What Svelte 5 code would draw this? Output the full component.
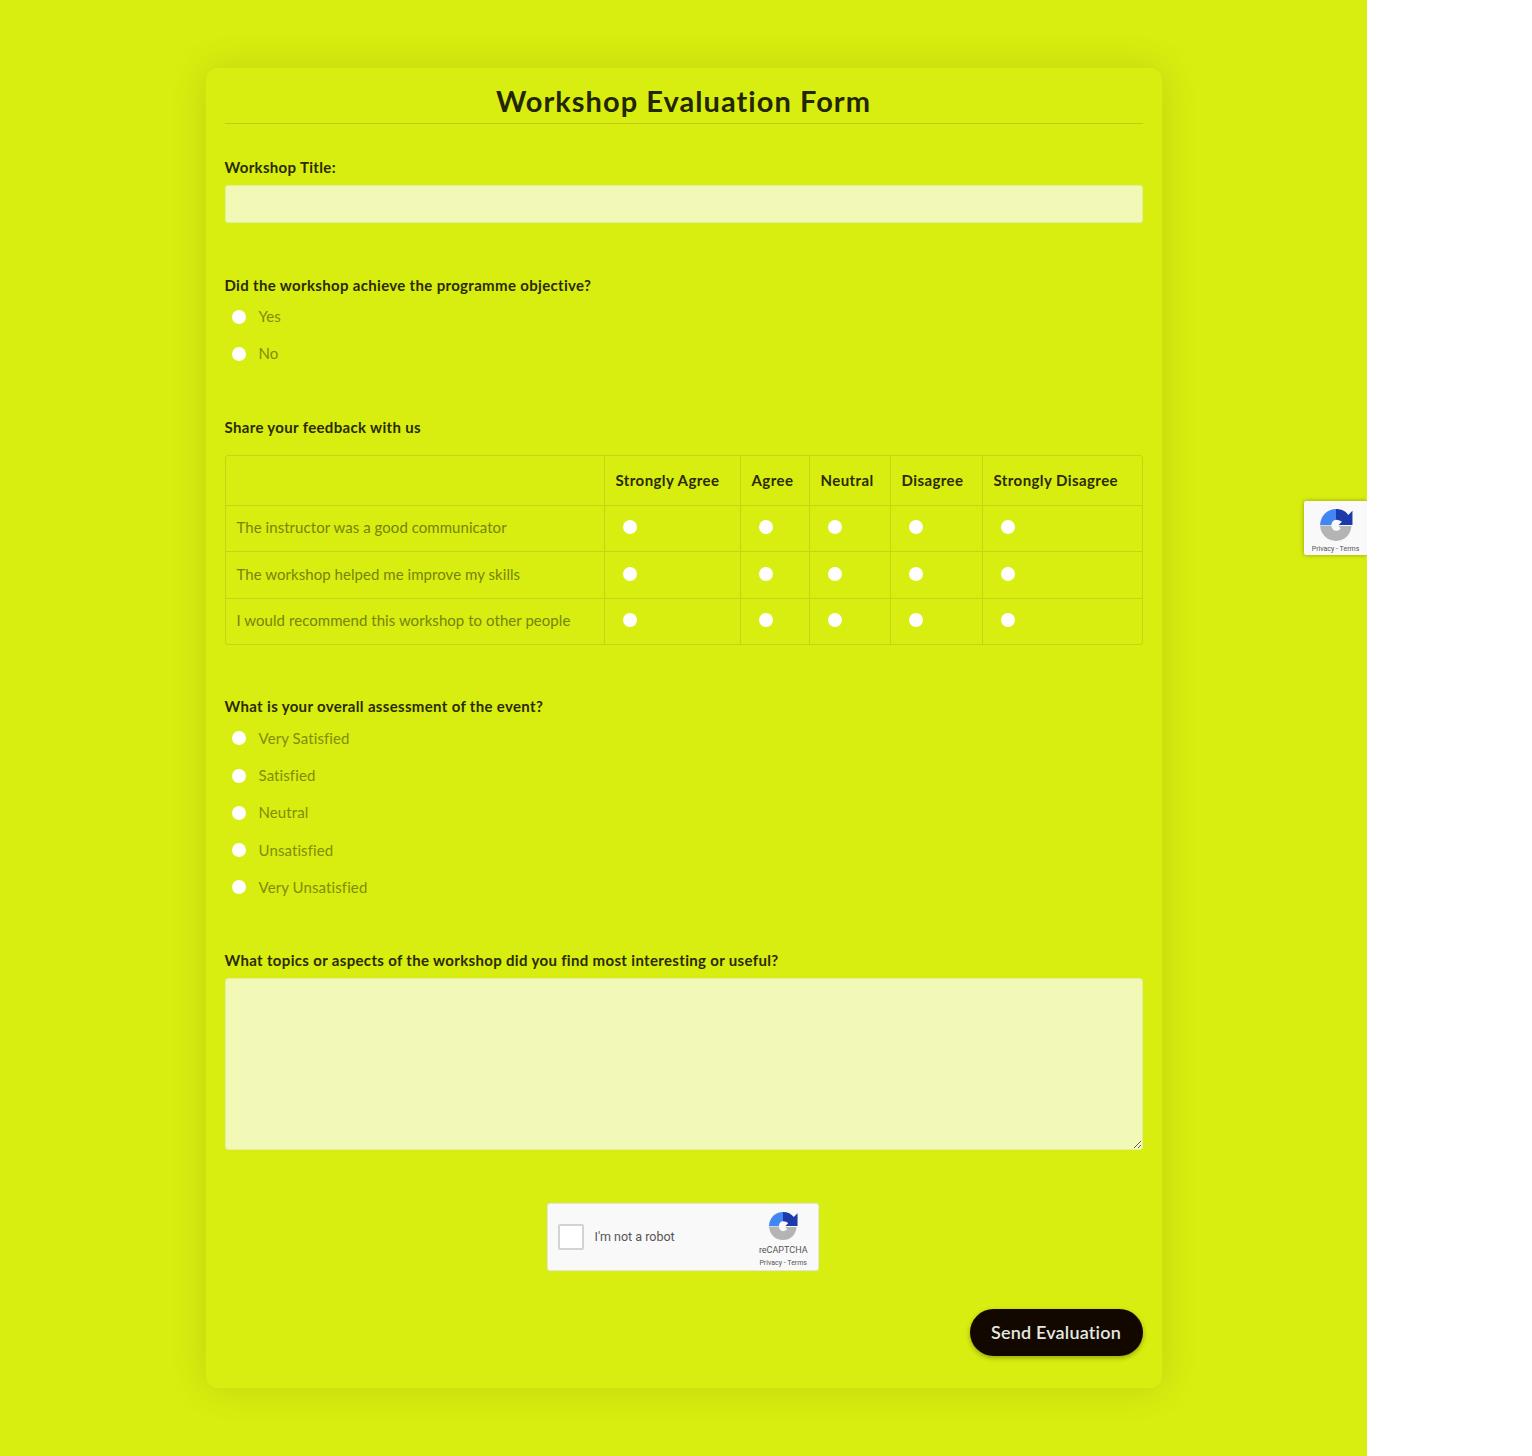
<script lang="ts">
  const columns = [
    { name: 'Strongly Agree', width: 136 },
    { name: 'Agree', width: 69 },
    { name: 'Neutral', width: 81 },
    { name: 'Disagree', width: 92 },
    { name: 'Strongly Disagree', width: 160 }
  ];
  const statements = [
    'The instructor was a good communicator',
    'The workshop helped me improve my skills',
    'I would recommend this workshop to other people'
  ];
  const assessment = ['Very Satisfied', 'Satisfied', 'Neutral', 'Unsatisfied', 'Very Unsatisfied'];
</script>

{#snippet logo(size: number)}
  <svg class="logo" width={size} height={size} viewBox="0 0 64 64" aria-hidden="true">
    <path fill="#1c3aa9" d="M32 2C42 2 50 6 55 13L63 5V32H37L43 26C41 24 37 22 32 22Z" />
    <path fill="#4285f4" d="M32 2V22C27 22 24 26 23 32H2C3 14 16 2 32 2Z" />
    <path fill="#b4b4b4" d="M2 33H23C24 39 27 43 32 43C36 43 39 41 41 38L36 34H61C60 50 48 62 32 62C16 62 3 50 2 33Z" />
  </svg>
{/snippet}

<div class="page">
  <form class="card">
    <h1>Workshop Evaluation Form</h1>

    <section class="title-field">
      <label for="title">Workshop Title:</label>
      <input id="title" class="text" type="text" />
    </section>

    <section class="objective">
      <p class="label">Did the workshop achieve the programme objective?</p>
      <div class="options">
        <label class="option"><input type="radio" name="objective" />Yes</label>
        <label class="option"><input type="radio" name="objective" />No</label>
      </div>
    </section>

    <section class="feedback">
      <p class="label">Share your feedback with us</p>
      <table>
        <thead>
          <tr>
            <th></th>
            {#each columns as col}
              <th style="width: {col.width}px">{col.name}</th>
            {/each}
          </tr>
        </thead>
        <tbody>
          {#each statements as statement, i}
            <tr>
              <td class="statement">{statement}</td>
              {#each columns as col}
                <td><input type="radio" name="row-{i}" aria-label={col.name} /></td>
              {/each}
            </tr>
          {/each}
        </tbody>
      </table>
    </section>

    <section class="overall">
      <p class="label">What is your overall assessment of the event?</p>
      <div class="options">
        {#each assessment as item}
          <label class="option"><input type="radio" name="overall" />{item}</label>
        {/each}
      </div>
    </section>

    <section class="topics">
      <label for="topics">What topics or aspects of the workshop did you find most interesting or useful?</label>
      <textarea id="topics"></textarea>
    </section>

    <div class="captcha">
      <span class="check"></span>
      <span class="robot">I'm not a robot</span>
      <div class="brand">
        {@render logo(30)}
        <span class="brand-name">reCAPTCHA</span>
        <span class="brand-links">Privacy - Terms</span>
      </div>
    </div>

    <div class="actions">
      <button type="button">Send Evaluation</button>
    </div>
  </form>

  <div class="badge">
    {@render logo(34)}
    <span class="brand-links">Privacy - Terms</span>
  </div>
</div>

<style>
  :global(body) {
    margin: 0;
    background: #fff;
  }

  .page {
    position: relative;
    width: 1367px;
    height: 1456px;
    padding-top: 68px;
    box-sizing: border-box;
    background: #d8ee10;
    font-family: Lato, "Noto Sans", sans-serif;
    color: #2b2b00;
    overflow: hidden;
  }

  .card {
    width: 956px;
    height: 1320px;
    margin: 0 auto;
    padding: 0 19px;
    box-sizing: border-box;
    border-radius: 12px;
    background: #d8ee10;
    box-shadow: 0 0 36px rgba(70, 80, 0, 0.16);
  }

  h1 {
    margin: 0;
    height: 56px;
    box-sizing: border-box;
    padding-top: 15px;
    border-bottom: 1px solid #bccf14;
    font-size: 29px;
    line-height: 36px;
    font-weight: 700;
    letter-spacing: 1.05px;
    text-align: center;
    color: #232600;
  }

  section label:not(.option),
  .label {
    display: block;
    margin: 0;
    font-size: 15px;
    line-height: 20px;
    font-weight: 700;
    letter-spacing: 0.33px;
    color: #2b2b00;
  }

  .title-field {
    margin-top: 33px;
  }

  .text {
    display: block;
    width: 100%;
    height: 38px;
    margin-top: 8px;
    box-sizing: border-box;
    border: 1px solid #e6ed9f;
    border-radius: 3px;
    background: #f2f8b6;
  }

  .objective {
    margin-top: 52px;
  }

  .options {
    display: flex;
    flex-direction: column;
    gap: 17.25px;
    margin-top: 11px;
  }

  .overall .options {
    margin-top: 12px;
  }

  .option {
    display: flex;
    align-items: center;
    gap: 13px;
    height: 20px;
    padding-left: 7px;
    font-size: 15px;
    letter-spacing: 0.1px;
    color: #7f8d08;
  }

  input[type='radio'] {
    appearance: none;
    display: block;
    width: 14px;
    height: 14px;
    margin: 0;
    border-radius: 50%;
    background: #fff;
  }

  .option input[type='radio'] {
    margin-top: 1px;
  }

  .feedback {
    margin-top: 54px;
  }

  table {
    width: 918px;
    margin-top: 18px;
    border: 1px solid #c3d612;
    border-radius: 3px;
    border-spacing: 0;
    table-layout: fixed;
    font-size: 15px;
  }

  th,
  td {
    padding: 0 11px;
    border-left: 1px solid #c3d612;
    border-top: 1px solid #c3d612;
    box-sizing: border-box;
    text-align: left;
  }

  th {
    height: 49px;
    padding-bottom: 2px;
    border-top: 0;
    font-weight: 700;
    letter-spacing: 0.42px;
    color: #2b2b00;
  }

  td {
    height: 46.2px;
  }

  th:first-child,
  td:first-child {
    border-left: 0;
  }

  .statement {
    padding-bottom: 3px;
    letter-spacing: 0.05px;
    color: #76840a;
  }

  td input[type='radio'] {
    margin: -3px 0 0 7px;
  }

  .overall {
    margin-top: 51px;
  }

  .topics {
    margin-top: 53px;
  }

  textarea {
    display: block;
    width: 100%;
    height: 172px;
    margin-top: 8px;
    box-sizing: border-box;
    border: 1px solid #e6ed9f;
    border-radius: 3px;
    background: #f2f8b6;
  }

  .captcha {
    display: flex;
    align-items: center;
    width: 272px;
    height: 68px;
    margin: 53px 0 0 322px;
    padding: 0 10px;
    box-sizing: border-box;
    border: 1px solid #e4e4e4;
    border-radius: 3px;
    background: #f9f9f9;
    color: #555;
    font-family: Roboto, sans-serif;
  }

  .check {
    width: 26px;
    height: 26px;
    box-sizing: border-box;
    border: 2px solid #d3d3d3;
    border-radius: 2px;
    background: #fff;
  }

  .robot {
    margin-left: 11px;
    font-size: 12.5px;
  }

  .brand {
    display: flex;
    flex-direction: column;
    align-items: center;
    margin-top: 6px;
    margin-left: auto;
  }

  .brand-name {
    margin-top: 4px;
    font-size: 9px;
    line-height: 11px;
  }

  .brand .brand-links {
    margin-top: 2px;
  }

  .brand-links {
    font-family: Roboto, sans-serif;
    font-size: 7px;
    line-height: 10px;
    color: #555;
  }

  .actions {
    display: flex;
    justify-content: flex-end;
    margin-top: 38px;
  }

  button {
    width: 173px;
    height: 47px;
    border: 0;
    border-radius: 24px;
    background: #120800;
    box-shadow: 0 2px 5px rgba(0, 0, 0, 0.3);
    color: #e6e8e0;
    font-family: inherit;
    font-size: 18px;
    font-weight: 600;
    letter-spacing: 0.2px;
  }

  .badge {
    position: absolute;
    top: 501px;
    left: 1304px;
    display: flex;
    flex-direction: column;
    align-items: center;
    width: 63px;
    height: 54px;
    padding-top: 7px;
    box-sizing: border-box;
    border-radius: 2px 0 0 2px;
    background: #f9f9f9;
    box-shadow: 0 0 4px rgba(0, 0, 0, 0.35);
  }

  .badge .brand-links {
    margin-top: 2px;
  }
</style>
